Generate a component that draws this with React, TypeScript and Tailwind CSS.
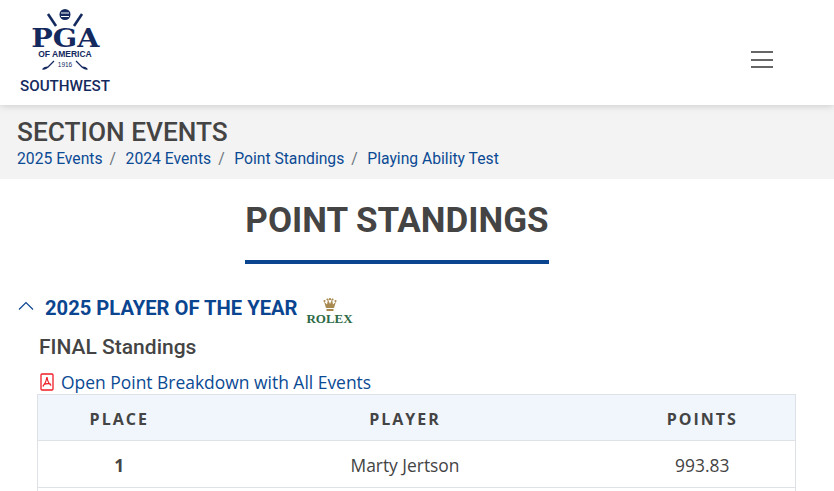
const roboto = "font-['Roboto',sans-serif]";

function Logo() {
  return (
    <div className="flex w-[92px] flex-col items-center text-[#14295e]">
      <svg width="40" height="18" viewBox="0 0 40 18" className="block">
        <line x1="3" y1="5" x2="11" y2="17" stroke="#14295e" strokeWidth="2.6" />
        <line x1="37" y1="5" x2="29" y2="17" stroke="#14295e" strokeWidth="2.6" />
        <circle cx="20" cy="5.500" r="5.500" fill="#14295e" />
        <path d="M16 4h8M16 7.500h8" stroke="#ffffff" strokeWidth="1.200" />
      </svg>
      <div className="mt-[1px] scale-x-[1.12] font-['DejaVu_Serif',serif] text-[25.500px] leading-[21px] font-bold">PGA</div>
      <div className="font-['Liberation_Sans',sans-serif] text-[8.500px] leading-[10px] font-bold">OF AMERICA</div>
      <div className="mt-[1px] flex h-[11px] items-center gap-[3px]">
        <svg width="14" height="11" viewBox="0 0 14 11">
          <path d="M13 1L7 7" stroke="#14295e" strokeWidth="1.300" />
          <path d="M8 6.500C7 9 3 10 1 9.500C2 7 5 6 8 6.500Z" fill="#14295e" />
        </svg>
        <span className="font-['Liberation_Sans',sans-serif] text-[6.500px] leading-none">1916</span>
        <svg width="14" height="11" viewBox="0 0 14 11">
          <path d="M1 1L7 7" stroke="#14295e" strokeWidth="1.300" />
          <path d="M6 6.500C7 9 11 10 13 9.500C12 7 9 6 6 6.500Z" fill="#14295e" />
        </svg>
      </div>
      <div className="mt-[7px] font-['Roboto',sans-serif] text-[15.200px] leading-[16px] font-medium">SOUTHWEST</div>
    </div>
  );
}

function RolexMark() {
  return (
    <div className="flex w-[48px] flex-col items-center">
      <svg width="14" height="14" viewBox="0 0 14 14" className="block">
        <path d="M3 10L1 3.500l3 3L5 1.500l2 4.500L9 1.500l1 5 3-3L11 10Z" fill="#a8894f" />
        <circle cx="1.500" cy="3" r="1.100" fill="#a8894f" />
        <circle cx="4.500" cy="1.500" r="1.100" fill="#a8894f" />
        <circle cx="7" cy="1.200" r="1.100" fill="#a8894f" />
        <circle cx="9.500" cy="1.500" r="1.100" fill="#a8894f" />
        <circle cx="12.500" cy="3" r="1.100" fill="#a8894f" />
        <rect x="3.500" y="11" width="7" height="2" fill="#a8894f" />
      </svg>
      <div className="mt-[1px] font-['Liberation_Serif',serif] text-[13px] leading-[11px] font-bold text-[#2d6a45]">ROLEX</div>
    </div>
  );
}

function PdfIcon() {
  return (
    <svg width="14" height="18" viewBox="0 0 14 18" className="block shrink-0">
      <rect x="1" y="1" width="12" height="16" rx="1" fill="#ffffff" stroke="#ee1c25" strokeWidth="1.300" />
      <path d="M7 4C6.500 8 5 11 2.800 13.500M7 4C7.500 8 9 11 11.200 12.500M4 11.500C6 10.500 8.500 10.500 11 11" fill="none" stroke="#ee1c25" strokeWidth="1.200" />
    </svg>
  );
}

export default function App() {
  const crumbs = ["2025 Events", "2024 Events", "Point Standings", "Playing Ability Test"];

  return (
    <div className="h-[491px] w-[834px] overflow-hidden bg-white font-['Open_Sans',sans-serif] text-[#444444]">
      <header className="relative z-10 flex h-[105px] items-start justify-between bg-white pr-[61px] pl-[19px] shadow-[0_0_8px_rgba(0,0,0,0.2)]">
        <div className="pt-[9px]">
          <Logo />
        </div>
        <div className="mt-[51px] flex w-[22px] flex-col gap-[5.500px]">
          <div className="h-[2px] bg-[#666666]" />
          <div className="h-[2px] bg-[#666666]" />
          <div className="h-[2px] bg-[#666666]" />
        </div>
      </header>

      <section className={`h-[74px] bg-[#f3f3f3] pt-[12px] pl-[17px] ${roboto}`}>
        <h2 className="text-[26.250px] leading-[30px] font-medium text-[#444444]">SECTION EVENTS</h2>
        <nav className="mt-[1px] flex text-[15.700px] leading-[22px] text-[#0b4a94]">
          {crumbs.map((c, i) => (
            <span key={c} className="flex">
              <a>{c}</a>
              {i < crumbs.length - 1 && <span className="mr-[9.500px] ml-[7px] text-[#6c757d]">/</span>}
            </span>
          ))}
        </nav>
      </section>

      <div className="flex justify-center pt-[18px] pr-[40px]">
        <h1 className={`border-b-[4px] border-[#0b4590] pb-[15px] text-[35px] leading-[48px] font-bold text-[#444444] ${roboto}`}>
          POINT STANDINGS
        </h1>
      </div>

      <div className="mt-[30px] flex items-start pl-[18px]">
        <svg width="16" height="10" viewBox="0 0 16 10" className="mt-[7px] mr-[11px] shrink-0">
          <path d="M1 8.500L8 1.500L15 8.500" fill="none" stroke="#0b4590" strokeWidth="1.200" />
        </svg>
        <h3 className={`text-[20.200px] leading-[28px] font-bold text-[#0b4590] ${roboto}`}>2025 PLAYER OF THE YEAR</h3>
        <div className="mt-[4px] ml-[8px] h-[28px]">
          <RolexMark />
        </div>
      </div>

      <div className="pl-[39px]">
        <h4 className={`mt-[6px] text-[21px] leading-[30px] font-medium text-[#444444] ${roboto}`}>FINAL Standings</h4>
        <a className="mt-[8px] ml-[1px] flex h-[24px] items-center gap-[7px] text-[17.450px] leading-[24px] text-[#0b4a94]">
          <PdfIcon />
          Open Point Breakdown with All Events
        </a>
      </div>

      <table className="ml-[37px] w-[758px] table-fixed border-collapse border border-[#dee2e6] text-[16px]">
        <colgroup>
          <col className="w-[163px]" />
          <col className="w-[409px]" />
          <col className="w-[186px]" />
        </colgroup>
        <thead>
          <tr className="h-[46px] border-b border-[#dee2e6] bg-[#f1f6fd]">
            {["PLACE", "PLAYER", "POINTS"].map((h) => (
              <th key={h} className="pt-[2px] text-center font-bold tracking-[2px]">{h}</th>
            ))}
          </tr>
        </thead>
        <tbody className="text-[17.400px]">
          <tr className="h-[47px] border-b border-[#dee2e6]">
            <td className="pt-[2px] text-center font-bold">1</td>
            <td className="pt-[2px] text-center">Marty Jertson</td>
            <td className="pt-[2px] text-center">993.83</td>
          </tr>
          <tr className="h-[47px]">
            <td />
            <td />
            <td />
          </tr>
        </tbody>
      </table>
    </div>
  );
}
